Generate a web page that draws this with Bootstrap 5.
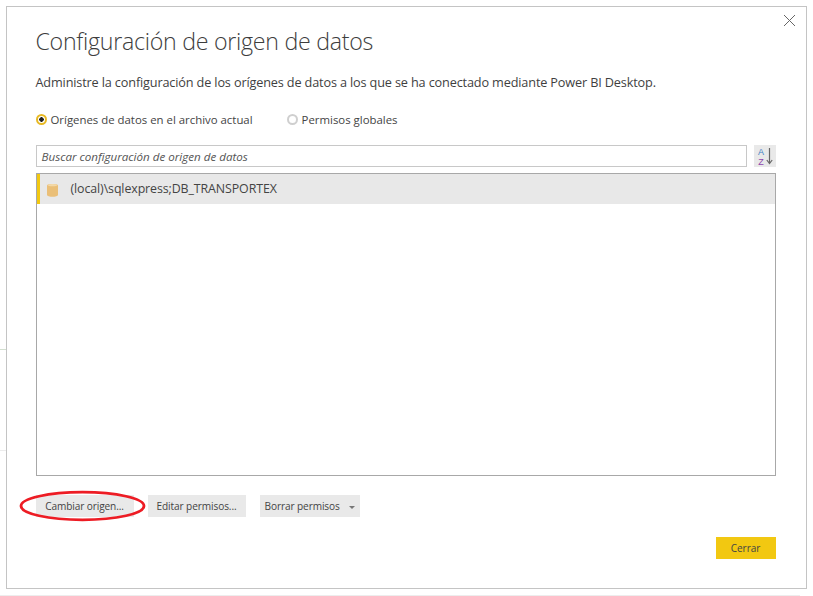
<!DOCTYPE html>
<html lang="es">
<head>
<meta charset="utf-8">
<title>Configuración de origen de datos</title>
<link href="https://cdn.jsdelivr.net/npm/bootstrap@5.3.0/dist/css/bootstrap.min.css" rel="stylesheet">
<style>
html,body{height:100%;}
body{background:#fff;font-family:"Open Sans","Noto Sans","Liberation Sans",sans-serif;color:#444;overflow:hidden;position:relative;}
.dlg{width:801px;height:583px;margin:6px 0 0 6px;border:1.5px solid #c4c4c4;padding:0 30.5px 0 28.5px;position:relative;background:#fff;}
.dlg-x{position:absolute;top:6px;right:9px;width:15px;height:15px;padding:0;border:0;background:none;line-height:0;}
.dlg-title{font-size:23.2px;font-weight:300;color:#3d3d3d;margin:0;padding-top:18px;line-height:33px;letter-spacing:-.27px;}
.dlg-desc{font-size:12.7px;color:#3f3f3f;margin:15px 0 0;line-height:18px;letter-spacing:-.15px;}
.rad-row{margin-top:20px;height:18px;gap:34px;font-size:11.4px;color:#444;}
.rad{width:11px;height:11px;border-radius:50%;display:inline-block;flex:none;margin-right:4px;}
.rad-on{border:2px solid #e8b923;background:radial-gradient(circle,#222 0 2px,#fff 2.5px);}
.rad-off{border:2px solid #cfcfcf;background:#fff;}
.srch-row{margin-top:16px;gap:7px;}
.srch{flex:1;height:22px;border:1px solid #c8c8c8;font-size:11.6px;font-style:italic;color:#555;padding:1px 5px 0;line-height:20px;}
.sortbtn{width:22px;height:22px;background:#e9e9e9;display:flex;align-items:center;justify-content:center;padding:0;border:0;}
.srclist{margin-top:6px;height:303px;border:1px solid #a8a8a8;}
.srcitem{height:30px;background:#e8e8e8;border-left:3px solid #f2c811;font-size:12.4px;color:#444;padding:1px 0 0 7px;gap:13px;letter-spacing:-.1px;}
.acts{margin-top:19px;gap:14px;height:22px;position:relative;}
.gbtn{height:22px;background:#e9e9e9;border:0;border-radius:0;font-size:10.1px;color:#444;padding:0;width:98px;line-height:22px;letter-spacing:-.1px;}
.gbtn-wide{width:100px;text-align:left;padding-left:5px;}
.caret{width:0;height:0;border-left:3px solid transparent;border-right:3px solid transparent;border-top:3px solid #777;display:inline-block;margin-left:9px;vertical-align:middle;}
.oval{position:absolute;left:-17px;top:-5px;pointer-events:none;}
.closewrap{margin-top:20px;}
.ybtn{width:60px;height:22px;background:#f2c811;border:0;border-radius:0;font-size:10px;color:#444;padding:0;line-height:22px;}
.mk{position:absolute;left:0;height:1px;}
.mk1{top:349px;width:6px;background:#d3dfd0;}
.mk2{top:450px;width:6px;background:#ececec;}
.mk3{top:595px;width:800px;background:#ededed;}
</style>
</head>
<body>
<div class="mk mk1"></div><div class="mk mk2"></div><div class="mk mk3"></div>
<div class="dlg">
  <button class="dlg-x" type="button" aria-label="Cerrar">
    <svg width="15" height="15" viewBox="0 0 15 15"><path d="M2 2 13 13M13 2 2 13" stroke="#666" stroke-width="1" fill="none"/></svg>
  </button>
  <h1 class="dlg-title">Configuración de origen de datos</h1>
  <p class="dlg-desc">Administre la configuración de los orígenes de datos a los que se ha conectado mediante Power BI Desktop.</p>
  <div class="d-flex align-items-center rad-row">
    <label class="d-flex align-items-center"><span class="rad rad-on"></span>Orígenes de datos en el archivo actual</label>
    <label class="d-flex align-items-center"><span class="rad rad-off"></span>Permisos globales</label>
  </div>
  <div class="d-flex srch-row">
    <div class="srch">Buscar configuración de origen de datos</div>
    <button class="sortbtn" type="button" aria-label="Ordenar">
      <svg width="18" height="20" viewBox="0 0 18 20">
        <text x="2" y="8.5" font-family="Liberation Sans" font-size="9" fill="#3f7fc4">A</text>
        <text x="2.2" y="18.5" font-family="Liberation Sans" font-size="9" fill="#8e44ad">Z</text>
        <path d="M13.5 2V17M10.8 14 13.5 17.5 16.2 14" stroke="#666" stroke-width="1.2" fill="none"/>
      </svg>
    </button>
  </div>
  <div class="srclist">
    <div class="srcitem d-flex align-items-center">
      <svg width="11" height="14" viewBox="0 0 11 14"><path d="M0 2.2C0 .6 11 .6 11 2.2V12C11 14.4 0 14.4 0 12Z" fill="#eabf78"/><ellipse cx="5.5" cy="2.2" rx="4.5" ry="1.1" fill="#f3d9a8"/></svg>
      <span>(local)\sqlexpress;DB_TRANSPORTEX</span>
    </div>
  </div>
  <div class="d-flex acts">
    <button class="btn gbtn" type="button">Cambiar origen...</button>
    <button class="btn gbtn" type="button">Editar permisos...</button>
    <button class="btn gbtn gbtn-wide" type="button">Borrar permisos<span class="caret"></span></button>
    <svg class="oval" width="128" height="32" viewBox="0 0 128 32"><ellipse cx="63.5" cy="16" rx="61.5" ry="13.8" fill="none" stroke="#ed1c24" stroke-width="2.8"/></svg>
  </div>
  <div class="d-flex justify-content-end closewrap">
    <button class="btn ybtn" type="button">Cerrar</button>
  </div>
</div>
<script src="https://cdn.jsdelivr.net/npm/bootstrap@5.3.0/dist/js/bootstrap.bundle.min.js"></script>
</body>
</html>
